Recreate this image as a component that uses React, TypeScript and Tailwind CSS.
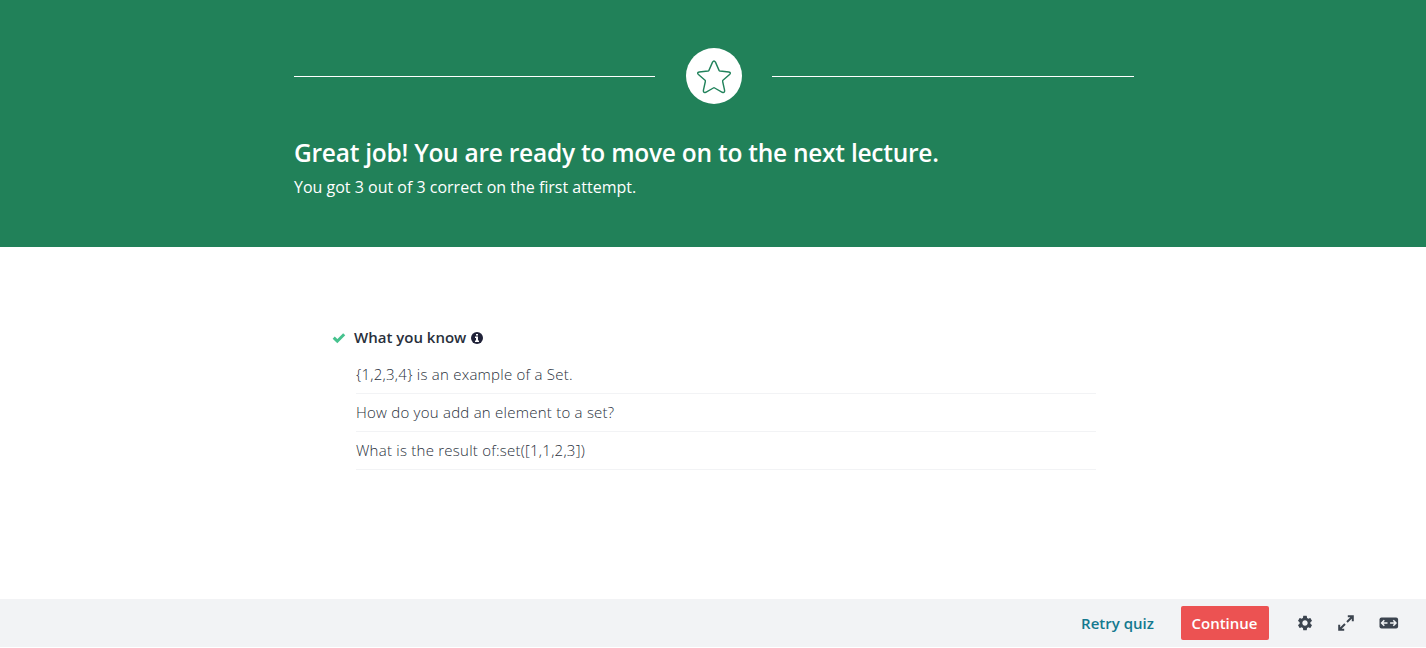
import { MdSettings } from "react-icons/md";

const known = [
  "{1,2,3,4} is an example of a Set.",
  "How do you add an element to a set?",
  "What is the result of:set([1,1,2,3])",
];

function Star() {
  return (
    <svg className="mt-px" width="36" height="36" viewBox="-.5 -.5 37 37" fill="none" stroke="#21825b" strokeWidth="1.45" strokeLinejoin="round">
      <path d="M16.5 2.7Q18 .3 19.5 2.7L23.2 11.2Q23.5 11.8 24.2 11.9L33.2 12.8Q36 13.4 34 15.5L27.2 21.4Q26.7 21.9 26.9 22.6L28.9 31.8Q29.1 34.7 26.5 33.7L18.7 29.3Q18 28.9 17.3 29.3L9.5 33.7Q6.9 34.7 7.1 31.8L9.1 22.6Q9.3 21.9 8.8 21.4L2 15.5Q0 13.4 2.8 12.8L11.8 11.9Q12.5 11.8 12.8 11.2Z" />
    </svg>
  );
}

function Check() {
  return (
    <svg className="mr-2" width="14" height="14" viewBox="0 0 14 14" fill="none" stroke="#46c28e" strokeWidth="3">
      <path d="M1.7 6.7L5.3 10.2L12.2 3.3" />
    </svg>
  );
}

function Info() {
  return (
    <svg className="ml-[5px]" width="12" height="12" viewBox="0 0 12 12">
      <circle cx="6" cy="6" r="6" fill="#202238" />
      <path d="M5 2H7V3.6H5ZM4 4.5H7V8.5H8V10H4V8.5H5V6H4Z" fill="#fff" />
    </svg>
  );
}

function Expand() {
  return (
    <svg width="16" height="16" viewBox="0 0 16 16" fill="none" stroke="#3c444f" strokeWidth="2">
      <path d="M9.8 1.2H14.8V6.2M14.5 1.5L9 7M6.2 14.8H1.2V9.8M1.5 14.5L7 9" />
    </svg>
  );
}

function Wide() {
  return (
    <svg width="20" height="12" viewBox="0 0 20 12">
      <rect x=".5" y=".5" width="18.6" height="11" rx="2" fill="#3c444f" />
      <path d="M5.3 3.2L2.6 6L5.3 8.8M3 6H8.5M14.3 3.2L17 6L14.3 8.8M16.6 6H11.1" fill="none" stroke="#f2f3f5" strokeWidth="1.5" />
    </svg>
  );
}

export default function App() {
  return (
    <div className="flex h-[648px] flex-col bg-white font-['Open_Sans',sans-serif]">
      <header className="h-[247px] bg-[#218159] pt-12 text-white">
        <div className="mx-auto w-[840px] translate-x-[1px]">
          <div className="flex items-center justify-between">
            <div className="h-px w-[361px] bg-white" />
            <div className="flex size-14 items-center justify-center rounded-full bg-white"><Star /></div>
            <div className="h-px w-[362px] bg-white" />
          </div>
          <h1 className="mt-8 text-[24.5px] leading-[34px] font-semibold tracking-[-0.25px] whitespace-nowrap">Great job! You are ready to move on to the next lecture.</h1>
          <p className="mt-1.5 text-[16px] leading-[22px]">You got 3 out of 3 correct on the first attempt.</p>
        </div>
      </header>
      <main className="flex-1 pt-20 pl-[332px]">
        <div className="flex h-[22px] items-center text-[15px] text-[#29303b]">
          <Check />
          <h2 className="-mt-0.5 w-[112px] font-semibold whitespace-nowrap">What you know</h2>
          <Info />
        </div>
        <ul className="mt-[7px] ml-6 w-[740px] text-[15px] font-light text-[#29303b]">
          {known.map((q) => (
            <li key={q} className="flex h-[38px] items-center border-b border-[#f2f3f5] tracking-[0.24px]">{q}</li>
          ))}
        </ul>
      </main>
      <footer className="mb-px flex h-12 items-center justify-end bg-[#f2f3f5] pr-[27px] text-[15px]">
        <button className="w-[73px] font-semibold whitespace-nowrap text-[#14798f]">Retry quiz</button>
        <button className="ml-[27px] h-[34px] w-[88px] rounded-[2px] bg-[#ec5252] pr-px font-semibold text-white">Continue</button>
        <MdSettings className="ml-[27px] size-[18px] text-[#3c444f]" />
        <div className="ml-[24px]"><Expand /></div>
        <div className="ml-[25px]"><Wide /></div>
      </footer>
    </div>
  );
}
